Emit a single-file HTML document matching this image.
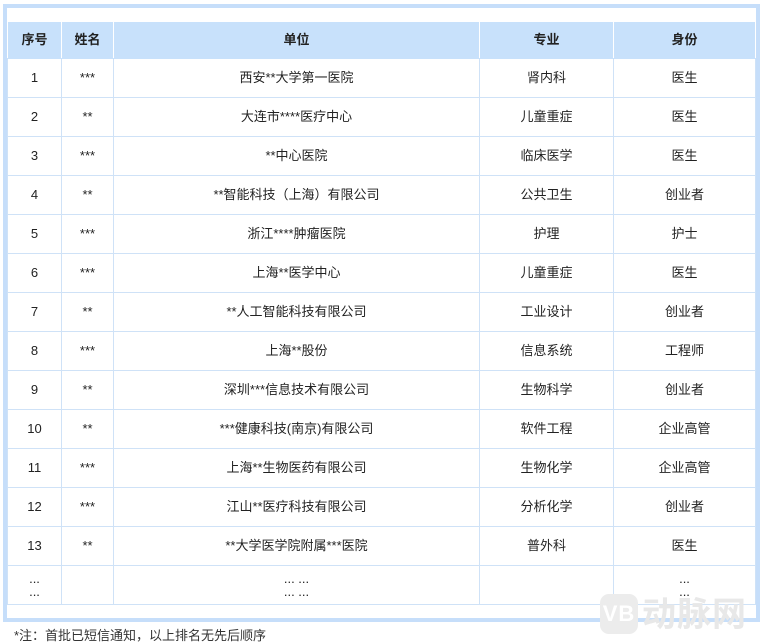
<!DOCTYPE html>
<html><head><meta charset="utf-8"><style>
body{margin:0;width:763px;height:644px;background:#fff;position:relative;overflow:hidden;font-family:"Liberation Sans","Noto Sans CJK SC",sans-serif;font-size:13px;color:#222}
.frame{position:absolute;left:3px;top:4px;width:749px;height:610px;border:4px solid #c6defa;background:#fff}
table{position:absolute;left:7px;top:21px;border-collapse:collapse;table-layout:fixed}
td,th{border:1px solid #cfe2f7;text-align:center;padding:0;height:38px;line-height:16px}
th{background:#c8e1fb;font-weight:bold;border-color:#fff #fff #c8e1fb #fff;height:36px}
.note{position:absolute;left:14px;top:625px;font-size:13px;color:#333}
.wm{position:absolute;left:600px;top:594px;font-size:34px;color:#e8e8e8;font-weight:bold;letter-spacing:1px;line-height:42px}
.wm b{display:inline-block;width:38px;height:40px;background:#ececec;border-radius:9px;color:#fff;font-size:22px;text-align:center;line-height:40px;vertical-align:top;margin-right:4px}
</style></head><body>
<div class="frame"></div>
<table>
<colgroup><col style="width:54px"><col style="width:52px"><col style="width:366px"><col style="width:134px"><col style="width:142px"></colgroup>
<tr><th>序号</th><th>姓名</th><th>单位</th><th>专业</th><th>身份</th></tr>
<tr><td>1</td><td>***</td><td>西安**大学第一医院</td><td>肾内科</td><td>医生</td></tr>
<tr><td>2</td><td>**</td><td>大连市****医疗中心</td><td>儿童重症</td><td>医生</td></tr>
<tr><td>3</td><td>***</td><td>**中心医院</td><td>临床医学</td><td>医生</td></tr>
<tr><td>4</td><td>**</td><td>**智能科技（上海）有限公司</td><td>公共卫生</td><td>创业者</td></tr>
<tr><td>5</td><td>***</td><td>浙江****肿瘤医院</td><td>护理</td><td>护士</td></tr>
<tr><td>6</td><td>***</td><td>上海**医学中心</td><td>儿童重症</td><td>医生</td></tr>
<tr><td>7</td><td>**</td><td>**人工智能科技有限公司</td><td>工业设计</td><td>创业者</td></tr>
<tr><td>8</td><td>***</td><td>上海**股份</td><td>信息系统</td><td>工程师</td></tr>
<tr><td>9</td><td>**</td><td>深圳***信息技术有限公司</td><td>生物科学</td><td>创业者</td></tr>
<tr><td>10</td><td>**</td><td>***健康科技(南京)有限公司</td><td>软件工程</td><td>企业高管</td></tr>
<tr><td>11</td><td>***</td><td>上海**生物医药有限公司</td><td>生物化学</td><td>企业高管</td></tr>
<tr><td>12</td><td>***</td><td>江山**医疗科技有限公司</td><td>分析化学</td><td>创业者</td></tr>
<tr><td>13</td><td>**</td><td>**大学医学院附属***医院</td><td>普外科</td><td>医生</td></tr>
<tr><td style="line-height:13px">...<br>...</td><td></td><td style="line-height:13px">... ...<br>... ...</td><td></td><td style="line-height:13px">...<br>...</td></tr>
</table>
<div class="wm"><b>VB</b>动脉网</div>
<div class="note">*注：首批已短信通知，以上排名无先后顺序</div>
</body></html>
